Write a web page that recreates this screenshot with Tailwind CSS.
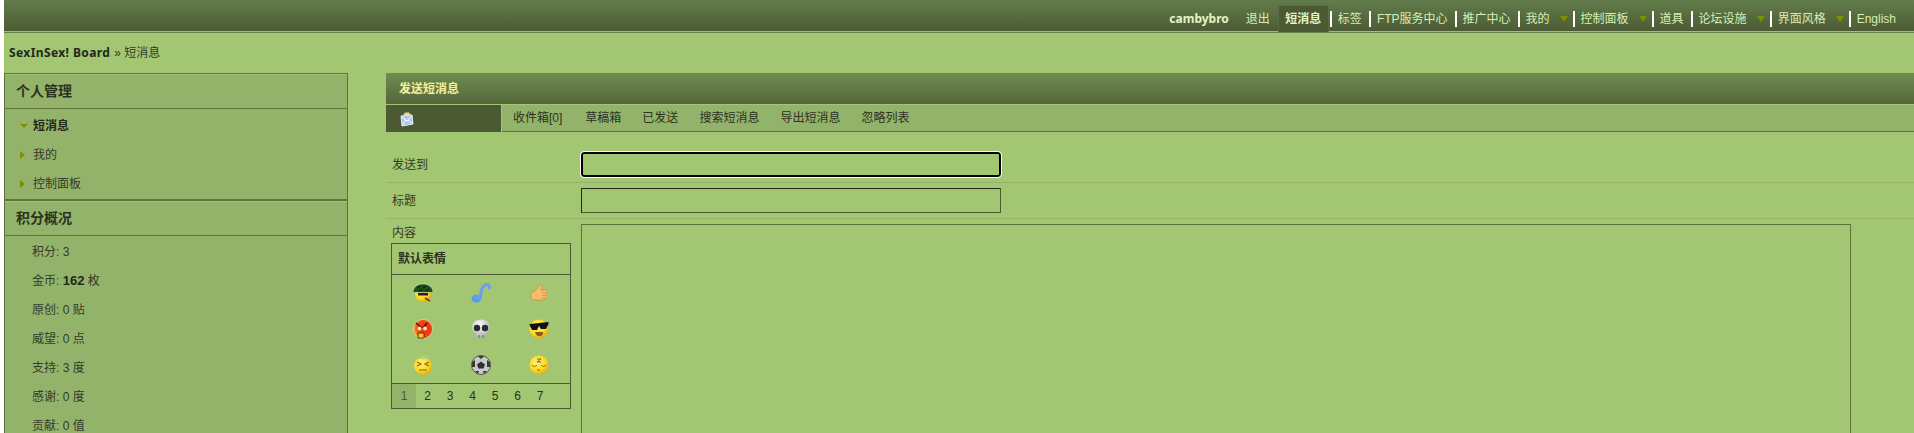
<!DOCTYPE html>
<html lang="zh-CN">
<head>
    <meta charset="UTF-8">
    <title>短消息</title>
    <script src="https://cdn.jsdelivr.net/npm/@tailwindcss/browser@4"></script>
</head>
<body class="bg-white h-[433px] overflow-hidden font-['Liberation_Sans','Noto_Sans_CJK_SC',sans-serif] text-[12px] text-[#333a28]">
<svg width="0" height="0" class="absolute">
    <defs>
        <radialGradient id="yellow" cx="40%" cy="35%" r="70%"><stop offset="0%" stop-color="#fff27a"/><stop offset="65%" stop-color="#fbd81e"/><stop offset="100%" stop-color="#e8a012"/></radialGradient>
        <radialGradient id="angry" cx="70%" cy="45%" r="75%"><stop offset="0%" stop-color="#f02a10"/><stop offset="60%" stop-color="#ee4a10"/><stop offset="100%" stop-color="#f8a828"/></radialGradient>
        <radialGradient id="bone" cx="40%" cy="30%" r="75%"><stop offset="0%" stop-color="#ffffff"/><stop offset="100%" stop-color="#a8a8a8"/></radialGradient>
        <linearGradient id="note" x1="0" y1="1" x2="1" y2="0"><stop offset="0%" stop-color="#3f9cf0"/><stop offset="100%" stop-color="#7a9cf0"/></linearGradient>
    </defs>
</svg>
<div class="ml-[4px] h-[433px] overflow-hidden bg-[#a3c673]">
    <!-- top nav -->
    <div class="h-[33px] pt-[5px] flex items-center justify-end pr-[18px] bg-gradient-to-b from-[#637c4b] to-[#4c5a34] border-b border-b-[#6b8050] shadow-[inset_0_-1px_0_#a0c070] text-[#d6efb4]">
        <span class="font-bold text-[#e3f5c6] mr-[17px] font-['Noto_Sans','Noto_Sans_CJK_SC',sans-serif] text-[12px]">cambybro</span>
        <span class="mr-[8px]">退出</span>
        <span class="h-[27px] w-[51px] flex items-center justify-center bg-[#4c5a34] font-bold text-[#e3f5c6] border-t border-x border-[#5b6d42]">短消息</span>
        <span class="w-[2px] h-[16px] bg-white ml-[1px] -mr-[1px]"></span>
        <span class="px-[7px]">标签</span>
        <span class="w-[2px] h-[16px] bg-white -mr-[1px]"></span>
        <span class="px-[7px]">FTP服务中心</span>
        <span class="w-[2px] h-[16px] bg-white -mr-[1px]"></span>
        <span class="px-[7px]">推广中心</span>
        <span class="w-[2px] h-[16px] bg-white -mr-[1px]"></span>
        <span class="pl-[7px] flex items-center">我的<i class="ml-[10px] mr-[5px] w-0 h-0 border-x-[4px] border-x-transparent border-t-[6px] border-t-[#7f8f00]"></i></span>
        <span class="w-[2px] h-[16px] bg-white -mr-[1px]"></span>
        <span class="pl-[7px] flex items-center">控制面板<i class="ml-[10px] mr-[5px] w-0 h-0 border-x-[4px] border-x-transparent border-t-[6px] border-t-[#7f8f00]"></i></span>
        <span class="w-[2px] h-[16px] bg-white -mr-[1px]"></span>
        <span class="px-[7px]">道具</span>
        <span class="w-[2px] h-[16px] bg-white -mr-[1px]"></span>
        <span class="pl-[7px] flex items-center">论坛设施<i class="ml-[10px] mr-[5px] w-0 h-0 border-x-[4px] border-x-transparent border-t-[6px] border-t-[#7f8f00]"></i></span>
        <span class="w-[2px] h-[16px] bg-white -mr-[1px]"></span>
        <span class="pl-[7px] flex items-center">界面风格<i class="ml-[10px] mr-[5px] w-0 h-0 border-x-[4px] border-x-transparent border-t-[6px] border-t-[#7f8f00]"></i></span>
        <span class="w-[2px] h-[16px] bg-white -mr-[1px]"></span>
        <span class="pl-[7px]">English</span>
    </div>

    <!-- breadcrumb -->
    <div class="h-[40px] flex items-center pl-[5px]">
        <b class="font-['Noto_Sans','Noto_Sans_CJK_SC',sans-serif] text-[12px] tracking-[0.4px] text-[#22281a]">SexInSex! Board</b>
        <span class="ml-[4px]">» 短消息</span>
    </div>

    <div class="flex items-start">
        <!-- sidebar -->
        <div class="w-[344px] shrink-0 bg-[#93b36b] border border-[#5d7439] h-[400px]">
            <div class="h-[35px] flex items-center pl-[11px] border-t border-t-[#a3c673] border-b border-b-[#5d7439] text-[14px] font-bold text-[#2b3220]">个人管理</div>
            <div class="h-[92px] pt-[2px] border-b-[2px] border-b-[#5d7439]">
                <div class="h-[29px] flex items-center pl-[15px]"><i class="mr-[5px] w-0 h-0 border-x-[4px] border-x-transparent border-t-[4px] border-t-[#7f8f00]"></i><b class="text-[#22281a]">短消息</b></div>
                <div class="h-[29px] flex items-center pl-[15px]"><i class="mr-[8px] w-0 h-0 border-y-[4px] border-y-transparent border-l-[5px] border-l-[#7f8f00]"></i>我的</div>
                <div class="h-[29px] flex items-center pl-[15px]"><i class="mr-[8px] w-0 h-0 border-y-[4px] border-y-transparent border-l-[5px] border-l-[#7f8f00]"></i>控制面板</div>
            </div>
            <div class="h-[35px] flex items-center pl-[11px] border-t border-t-[#a3c673] border-b border-b-[#5d7439] text-[14px] font-bold text-[#2b3220]">积分概况</div>
            <div class="pl-[27px] pt-[1px]">
                <div class="h-[29px] flex items-center">积分: 3</div>
                <div class="h-[29px] flex items-center whitespace-pre">金币: <b class="text-[#22281a] text-[13px]">162</b> 枚</div>
                <div class="h-[29px] flex items-center">原创: 0 贴</div>
                <div class="h-[29px] flex items-center">威望: 0 点</div>
                <div class="h-[29px] flex items-center">支持: 3 度</div>
                <div class="h-[29px] flex items-center">感谢: 0 度</div>
                <div class="h-[29px] flex items-center">贡献: 0 值</div>
            </div>
        </div>

        <!-- main -->
        <div class="ml-[38px] flex-1 min-w-0">
            <div class="h-[32px] flex items-center pl-[13px] bg-gradient-to-b from-[#708c52] to-[#54673b] border-b border-b-[#a3c673] font-bold text-[#eef0a0] [text-shadow:0_0_1px_#8a8a40]">发送短消息</div>
            <div class="flex h-[27px]">
                <div class="w-[115px] h-[27px] bg-[#4c5a34] flex items-center pl-[14px] shrink-0">
                    <svg width="14" height="16" viewBox="0 0 14 16">
                        <path d="M3 4 L5 1.5 H9 L11 4 Z" fill="#e8cf8a"/>
                        <path d="M1 5 L12 4 L13 13 L2 15 Z" fill="#a9c8ee" stroke="#e6eef8" stroke-width="1"/>
                        <path d="M2 6 L7 10 L12 5 M2 14 L6 9 M12 12 L8 9" fill="none" stroke="#ffffff" stroke-width="1"/>
                    </svg>
                </div>
                <div class="flex-1 ml-[1px] h-[27px] bg-[#93b36b] border-b border-b-[#5d7439] flex items-center gap-[21px] pl-[11px] text-[#2b3220]">
                    <span class="mr-[2px]">收件箱[0]</span><span>草稿箱</span><span>已发送</span><span>搜索短消息</span><span>导出短消息</span><span>忽略列表</span>
                </div>
            </div>

            <div class="pt-[18px]">
                <div class="h-[33px] flex items-center border-b border-b-[#93b36b] pb-[3px] pl-[6px]">
                    <span class="w-[189px] shrink-0">发送到</span>
                    <div class="w-[420px] h-[25px] rounded-[3px] border-[2px] border-black outline outline-1 outline-white bg-[#a3c673]"></div>
                </div>
                <div class="h-[36px] flex items-center border-b border-b-[#93b36b] pl-[6px]">
                    <span class="w-[189px] shrink-0">标题</span>
                    <div class="w-[420px] h-[25px] border border-[#4c5a34] border-t-[#222a14] border-l-[#222a14] bg-[#a3c673]"></div>
                </div>
                <div class="flex pt-[5px] pl-[5px]">
                    <div class="w-[192px] shrink-0">
                        <div class="h-[19px] leading-[19px] pl-[1px]">内容</div>
                        <div class="w-[180px] h-[166px] border border-[#4c5a34] flex flex-col">
                            <div class="h-[31px] flex items-center pl-[6px] border-b border-b-[#4c5a34] font-bold text-[#2b3220]">默认表情</div>
                            <div class="flex-1 grid grid-cols-3 place-items-center content-center pb-[1px] px-[2px] gap-y-[16px]">
                                <!-- helmet -->
                                <svg width="20" height="20" viewBox="0 0 20 20"><circle cx="10" cy="11" r="8" fill="url(#yellow)"/><path d="M0 9.5 C0 -2 20 -2 20 9.5 Z" fill="#1d4f18" stroke="#e8f0e0" stroke-width="0.5"/><path d="M4 5 L7 3 M10 5 L13 3 M6 8 L9 6 M13 8 L16 6" stroke="#0c2c0a" stroke-width="1.5"/><rect x="5" y="10" width="10" height="2.5" fill="#222"/><path d="M12 15 L17 18" stroke="#7a4a10" stroke-width="2"/></svg>
                                <!-- note -->
                                <svg width="20" height="20" viewBox="0 0 20 20"><ellipse cx="5.5" cy="15.5" rx="5" ry="4" fill="url(#note)"/><path d="M9.5 15 C9.5 9 11 4 14 2 C17 0 19 2 18 6" fill="none" stroke="#6f9cf0" stroke-width="3"/></svg>
                                <!-- thumb -->
                                <svg width="20" height="20" viewBox="0 0 20 20"><path d="M2 10 C6 9 8 7 10 2 C12 1 13 4 12 7 H17 C19 8 18 15 15 17 H7 C5 17 3 16 2 15 Z" fill="#f6bc6c" stroke="#d8913e" stroke-width="0.8"/><path d="M13 10 H17 M13 12.5 H17 M13 15 H16" stroke="#d8913e" stroke-width="0.8"/></svg>
                                <!-- angry -->
                                <svg width="20" height="20" viewBox="0 0 20 20"><circle cx="10" cy="10" r="9.5" fill="url(#angry)" stroke="#f0e8d8" stroke-width="0.6"/><path d="M3 4 L9 9 M14 4 L10 9" stroke="#401808" stroke-width="1.6"/><circle cx="6.5" cy="9.5" r="2" fill="#f0e0c0"/><circle cx="12" cy="9.5" r="2" fill="#f0e0c0"/><path d="M5 14 H11 V19 H5 Z" fill="#f6c81e" stroke="#401808" stroke-width="0.8"/></svg>
                                <!-- skull -->
                                <svg width="20" height="20" viewBox="0 0 20 20"><path d="M10 0.5 C16 0.5 19 4 19 9 C19 12 16 13 15 15 V19 H5 V15 C4 13 1 12 1 9 C1 4 4 0.5 10 0.5 Z" fill="url(#bone)"/><circle cx="6" cy="9" r="3.2" fill="#2b2b2b"/><circle cx="14" cy="9" r="3.2" fill="#2b2b2b"/><path d="M8 16 V19 M12 16 V19" stroke="#666"/></svg>
                                <!-- sunglasses -->
                                <svg width="20" height="20" viewBox="0 0 20 20"><circle cx="10" cy="10" r="9.5" fill="url(#yellow)"/><path d="M0.5 5 L19.5 3 V5 L17 10 H12 L10 7 L8 11 H3 L1 7 Z" fill="#111"/><path d="M6 13 H14 C15 18 7 19 6 13 Z" fill="#8a5a10"/></svg>
                                <!-- halo -->
                                <svg width="20" height="20" viewBox="0 0 20 20"><circle cx="10" cy="11" r="9" fill="url(#yellow)"/><ellipse cx="10" cy="2" rx="6" ry="1.6" fill="none" stroke="#c4c86a"/><path d="M4 7 L8 9 L4 11 M16 7 L12 9 L16 11 M6 15 H14" fill="none" stroke="#8a6414" stroke-width="1.2"/></svg>
                                <!-- ball -->
                                <svg width="20" height="20" viewBox="0 0 20 20"><circle cx="10" cy="10" r="9.5" fill="#c8c8c8" stroke="#555"/><path d="M10 6.5 L14 9.5 L12.5 13.5 H7.5 L6 9.5 Z" fill="#2e2e2e"/><path d="M6.5 1 H13.5 L10 4 Z M1 7 L4 5 L4 12 L1 12 Z M19 7 L16 5 L16 12 L19 12 Z M4 16 L8 16 L7 19 Z M16 16 L12 16 L13 19 Z" fill="#3a3a3a"/></svg>
                                <!-- sleep -->
                                <svg width="20" height="20" viewBox="0 0 20 20"><circle cx="10" cy="10" r="9.5" fill="url(#yellow)"/><path d="M3 10 C5 12 6 12 8 10 M12 10 C14 12 15 12 17 10 M8 15 H11 M8 4 H12 L8 7 H12" fill="none" stroke="#8a6414"/></svg>
                            </div>
                            <div class="h-[25px] border-t border-t-[#4c5a34] flex items-center text-[#2b3220]">
                                <span class="w-[24px] h-full flex items-center justify-center bg-[#93b36b] text-[#4c5a34]">1</span>
                                <span class="w-[23px] text-center">2</span>
                                <span class="w-[22px] text-center">3</span>
                                <span class="w-[23px] text-center">4</span>
                                <span class="w-[22px] text-center">5</span>
                                <span class="w-[23px] text-center">6</span>
                                <span class="w-[22px] text-center">7</span>
                            </div>
                        </div>
                    </div>
                    <div class="-ml-[2px] w-[1270px] h-[240px] border border-[#5d7439] bg-[#a3c673]"></div>
                </div>
            </div>
        </div>
    </div>
</div>
</body>
</html>
